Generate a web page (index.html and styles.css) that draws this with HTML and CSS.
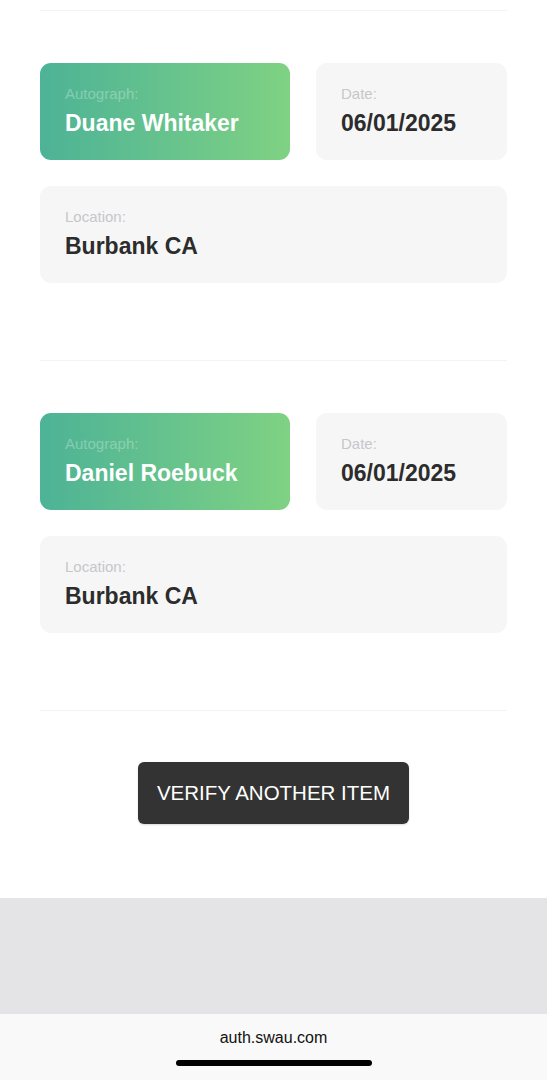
FILE: index.html
```html
<!DOCTYPE html>
<html>

<head>
    <title>Item Verification</title>
    <link rel="stylesheet" href="styles.css">
</head>

<body>
    <div class="page">
        <hr class="divider">

        <!-- first signature -->
        <div class="entry">
            <div class="row">
                <div class="box box-green">
                    <div class="label">Autograph:</div>
                    <div class="value">Duane Whitaker</div>
                </div>
                <div class="box">
                    <div class="label">Date:</div>
                    <div class="value">06/01/2025</div>
                </div>
            </div>
            <div class="box">
                <div class="label">Location:</div>
                <div class="value">Burbank CA</div>
            </div>
        </div>

        <hr class="divider">

        <!-- second signature -->
        <div class="entry">
            <div class="row">
                <div class="box box-green">
                    <div class="label">Autograph:</div>
                    <div class="value">Daniel Roebuck</div>
                </div>
                <div class="box">
                    <div class="label">Date:</div>
                    <div class="value">06/01/2025</div>
                </div>
            </div>
            <div class="box">
                <div class="label">Location:</div>
                <div class="value">Burbank CA</div>
            </div>
        </div>

        <hr class="divider">

        <div class="actions">
            <button class="btn" type="button">VERIFY ANOTHER ITEM</button>
        </div>
    </div>

    <div class="footer-space"></div>

    <div class="browser-bar">
        <div class="url">auth.swau.com</div>
        <div class="home-indicator"></div>
    </div>
</body>

</html>
```

FILE: styles.css
```css
html, body {
    margin: 0;
    padding: 0;
    background: #ffffff;
    font-family: "Liberation Sans", Arial, Helvetica, sans-serif;
}

.page {
    padding: 10px 40px 0 40px;
}

.divider {
    margin: 0;
    border: none;
    border-top: 1px solid #f3f3f4;
}

.entry {
    display: flex;
    flex-direction: column;
    gap: 26px;
    padding: 52px 0 77px 0;
}

.row {
    display: grid;
    grid-template-columns: 250px 1fr;
    gap: 26px;
}

.box {
    background: #f6f6f6;
    border-radius: 11px;
    padding: 21px 25px 23px 25px;
}

.box-green {
    background: linear-gradient(to right, #4db397, #7fd283);
}

.label {
    font-size: 15px;
    line-height: 20px;
    color: #c6c6cb;
    margin-bottom: 5px;
}

.value {
    font-size: 23px;
    line-height: 28px;
    font-weight: bold;
    color: #2c2c2c;
}

.box-green .label {
    color: rgba(255, 255, 255, 0.3);
}

.box-green .value {
    color: #ffffff;
}

.actions {
    display: flex;
    justify-content: center;
    padding: 51px 0 74px 0;
}

.btn {
    width: 271px;
    height: 62px;
    background: #333333;
    color: #ffffff;
    border: none;
    border-radius: 6px;
    font-family: "Liberation Sans", Arial, Helvetica, sans-serif;
    font-size: 20.5px;
    box-shadow: 0 1px 2px rgba(0, 0, 0, 0.15);
}

.footer-space {
    height: 116px;
    background: #e4e4e7;
}

.browser-bar {
    height: 66px;
    background: #f9f9f9;
    display: flex;
    flex-direction: column;
    align-items: center;
}

.url {
    margin-top: 15px;
    font-size: 16px;
    line-height: 18px;
    color: #111111;
}

.home-indicator {
    margin-top: 13px;
    width: 196px;
    height: 6px;
    border-radius: 3px;
    background: #000000;
}
```
